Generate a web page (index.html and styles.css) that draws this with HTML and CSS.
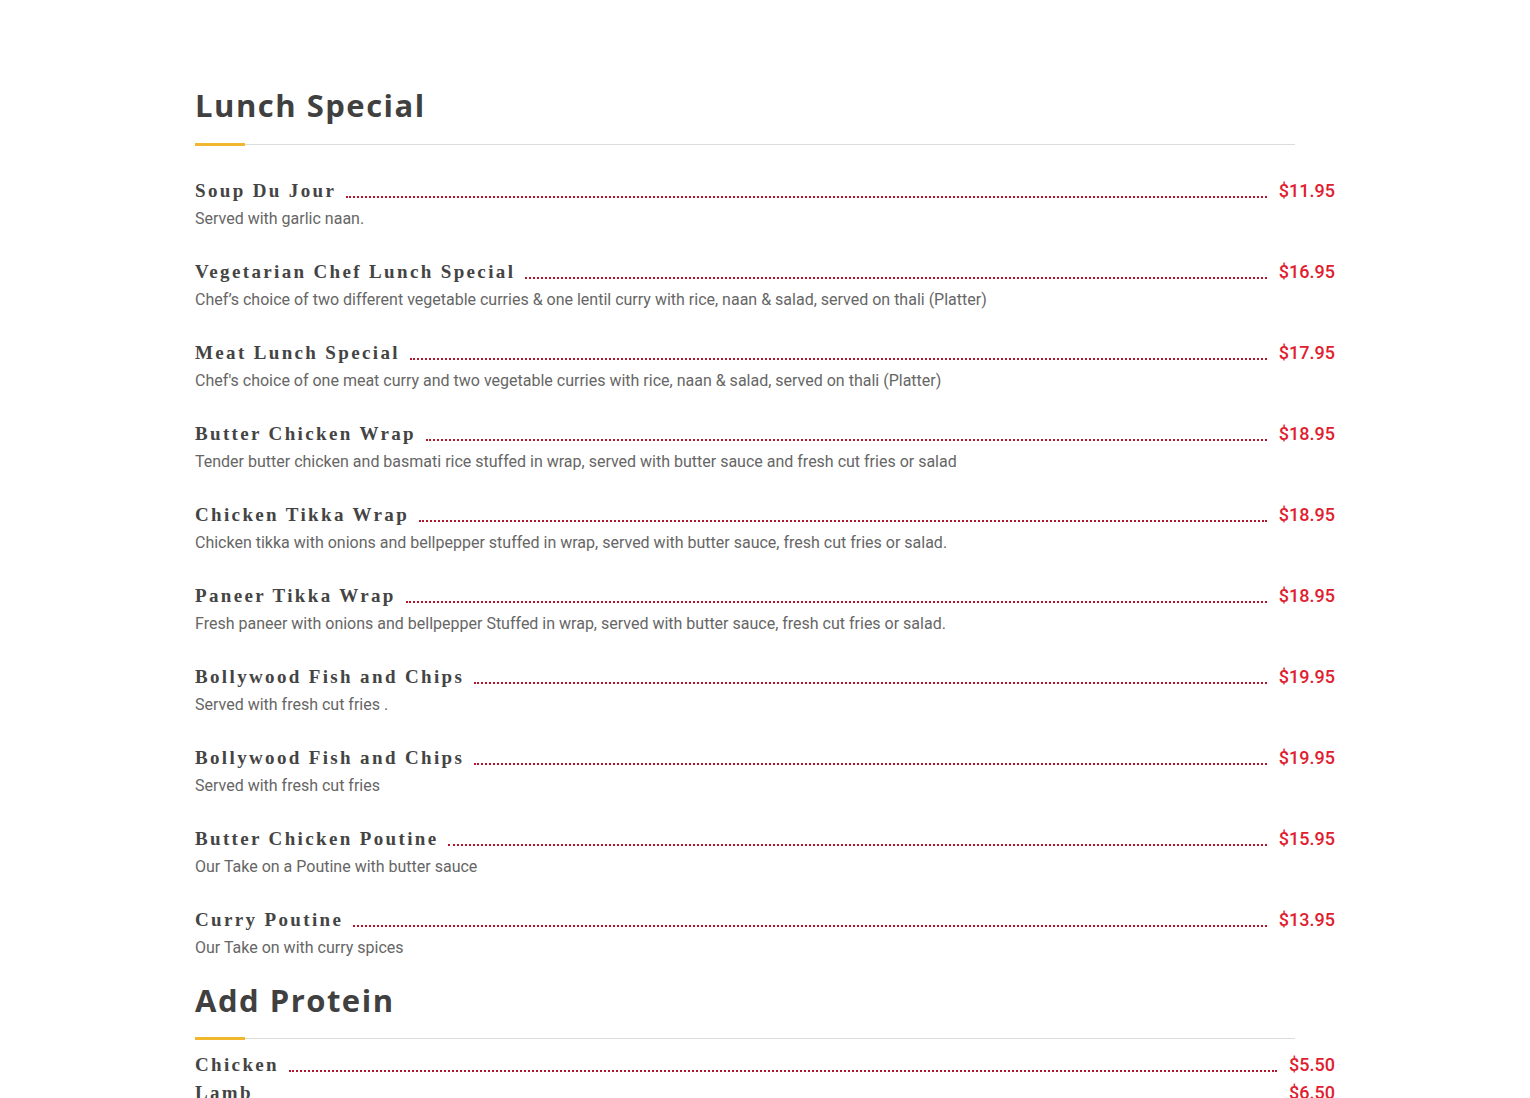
FILE: index.html
```html
<!DOCTYPE html>
<html lang="en">
<head>
    <meta charset="UTF-8">
    <meta name="viewport" content="width=device-width, initial-scale=1.0">
    <title>Lunch Special</title>
    <link rel="stylesheet" href="styles.css">
</head>
<body>
    <div class="menu">
        <h2 class="section-title">Lunch Special</h2>
        <div class="items">
            <div class="item">
                <div class="item-row"><span class="item-name">Soup Du Jour</span><span class="dots"></span><span class="price">$11.95</span></div>
                <p class="item-desc">Served with garlic naan.</p>
            </div>
            <div class="item">
                <div class="item-row"><span class="item-name">Vegetarian Chef Lunch Special</span><span class="dots"></span><span class="price">$16.95</span></div>
                <p class="item-desc">Chef’s choice of two different vegetable curries &amp; one lentil curry with rice, naan &amp; salad, served on thali (Platter)</p>
            </div>
            <div class="item">
                <div class="item-row"><span class="item-name">Meat Lunch Special</span><span class="dots"></span><span class="price">$17.95</span></div>
                <p class="item-desc">Chef's choice of one meat curry and two vegetable curries with rice, naan &amp; salad, served on thali (Platter)</p>
            </div>
            <div class="item">
                <div class="item-row"><span class="item-name">Butter Chicken Wrap</span><span class="dots"></span><span class="price">$18.95</span></div>
                <p class="item-desc">Tender butter chicken and basmati rice stuffed in wrap, served with butter sauce and fresh cut fries or salad</p>
            </div>
            <div class="item">
                <div class="item-row"><span class="item-name">Chicken Tikka Wrap</span><span class="dots"></span><span class="price">$18.95</span></div>
                <p class="item-desc">Chicken tikka with onions and bellpepper stuffed in wrap, served with butter sauce, fresh cut fries or salad.</p>
            </div>
            <div class="item">
                <div class="item-row"><span class="item-name">Paneer Tikka Wrap</span><span class="dots"></span><span class="price">$18.95</span></div>
                <p class="item-desc">Fresh paneer with onions and bellpepper Stuffed in wrap, served with butter sauce, fresh cut fries or salad.</p>
            </div>
            <div class="item">
                <div class="item-row"><span class="item-name">Bollywood Fish and Chips</span><span class="dots"></span><span class="price">$19.95</span></div>
                <p class="item-desc">Served with fresh cut fries .</p>
            </div>
            <div class="item">
                <div class="item-row"><span class="item-name">Bollywood Fish and Chips</span><span class="dots"></span><span class="price">$19.95</span></div>
                <p class="item-desc">Served with fresh cut fries</p>
            </div>
            <div class="item">
                <div class="item-row"><span class="item-name">Butter Chicken Poutine</span><span class="dots"></span><span class="price">$15.95</span></div>
                <p class="item-desc">Our Take on a Poutine with butter sauce</p>
            </div>
            <div class="item">
                <div class="item-row"><span class="item-name">Curry Poutine</span><span class="dots"></span><span class="price">$13.95</span></div>
                <p class="item-desc">Our Take on with curry spices</p>
            </div>
        </div>

        <h2 class="section-title second">Add Protein</h2>
        <div class="items compact">
            <div class="item">
                <div class="item-row"><span class="item-name">Chicken</span><span class="dots"></span><span class="price">$5.50</span></div>
            </div>
            <div class="item">
                <div class="item-row"><span class="item-name">Lamb</span><span class="dots"></span><span class="price">$6.50</span></div>
            </div>
        </div>
    </div>
</body>
</html>
```

FILE: styles.css
```css
body, html {
    margin: 0;
    padding: 0;
    background: #fff;
}
.menu {
    width: 1140px;
    margin-left: 195px;
    padding-top: 85px;
}
.section-title {
    position: relative;
    width: 1100px;
    margin: 0;
    padding-bottom: 19px;
    border-bottom: 1px solid #dcdcdc;
    font-family: "Open Sans", sans-serif;
    font-weight: 700;
    font-size: 31px;
    line-height: 40px;
    letter-spacing: 1.5px;
    color: #404040;
}
.section-title::after {
    content: '';
    position: absolute;
    left: 0;
    bottom: -2px;
    width: 50px;
    height: 3px;
    background-color: #f0b92d;
}
.section-title.second {
    margin-top: 20px;
    padding-bottom: 18px;
}
.items {
    padding-top: 34px;
}
.items.compact {
    padding-top: 14px;
}
.item {
    margin-bottom: 29px;
}
.item:last-child {
    margin-bottom: 0;
}
.compact .item {
    margin-bottom: 4px;
}
.item-row {
    display: flex;
    align-items: flex-end;
    height: 24px;
}
.item-name {
    font-family: "Liberation Serif", serif;
    font-weight: 700;
    font-size: 19px;
    line-height: 24px;
    letter-spacing: 2.35px;
    color: #444;
    white-space: nowrap;
}
.dots {
    flex: 1;
    margin: 0 12px 5px 10px;
    border-bottom: 2px dotted #b3162c;
}
.price {
    font-family: Roboto, sans-serif;
    font-weight: 500;
    font-size: 18px;
    line-height: 24px;
    color: #e0202f;
}
.item-desc {
    margin: 4px 0 0;
    font-family: Roboto, sans-serif;
    font-size: 16px;
    line-height: 24px;
    color: #666;
}
```
